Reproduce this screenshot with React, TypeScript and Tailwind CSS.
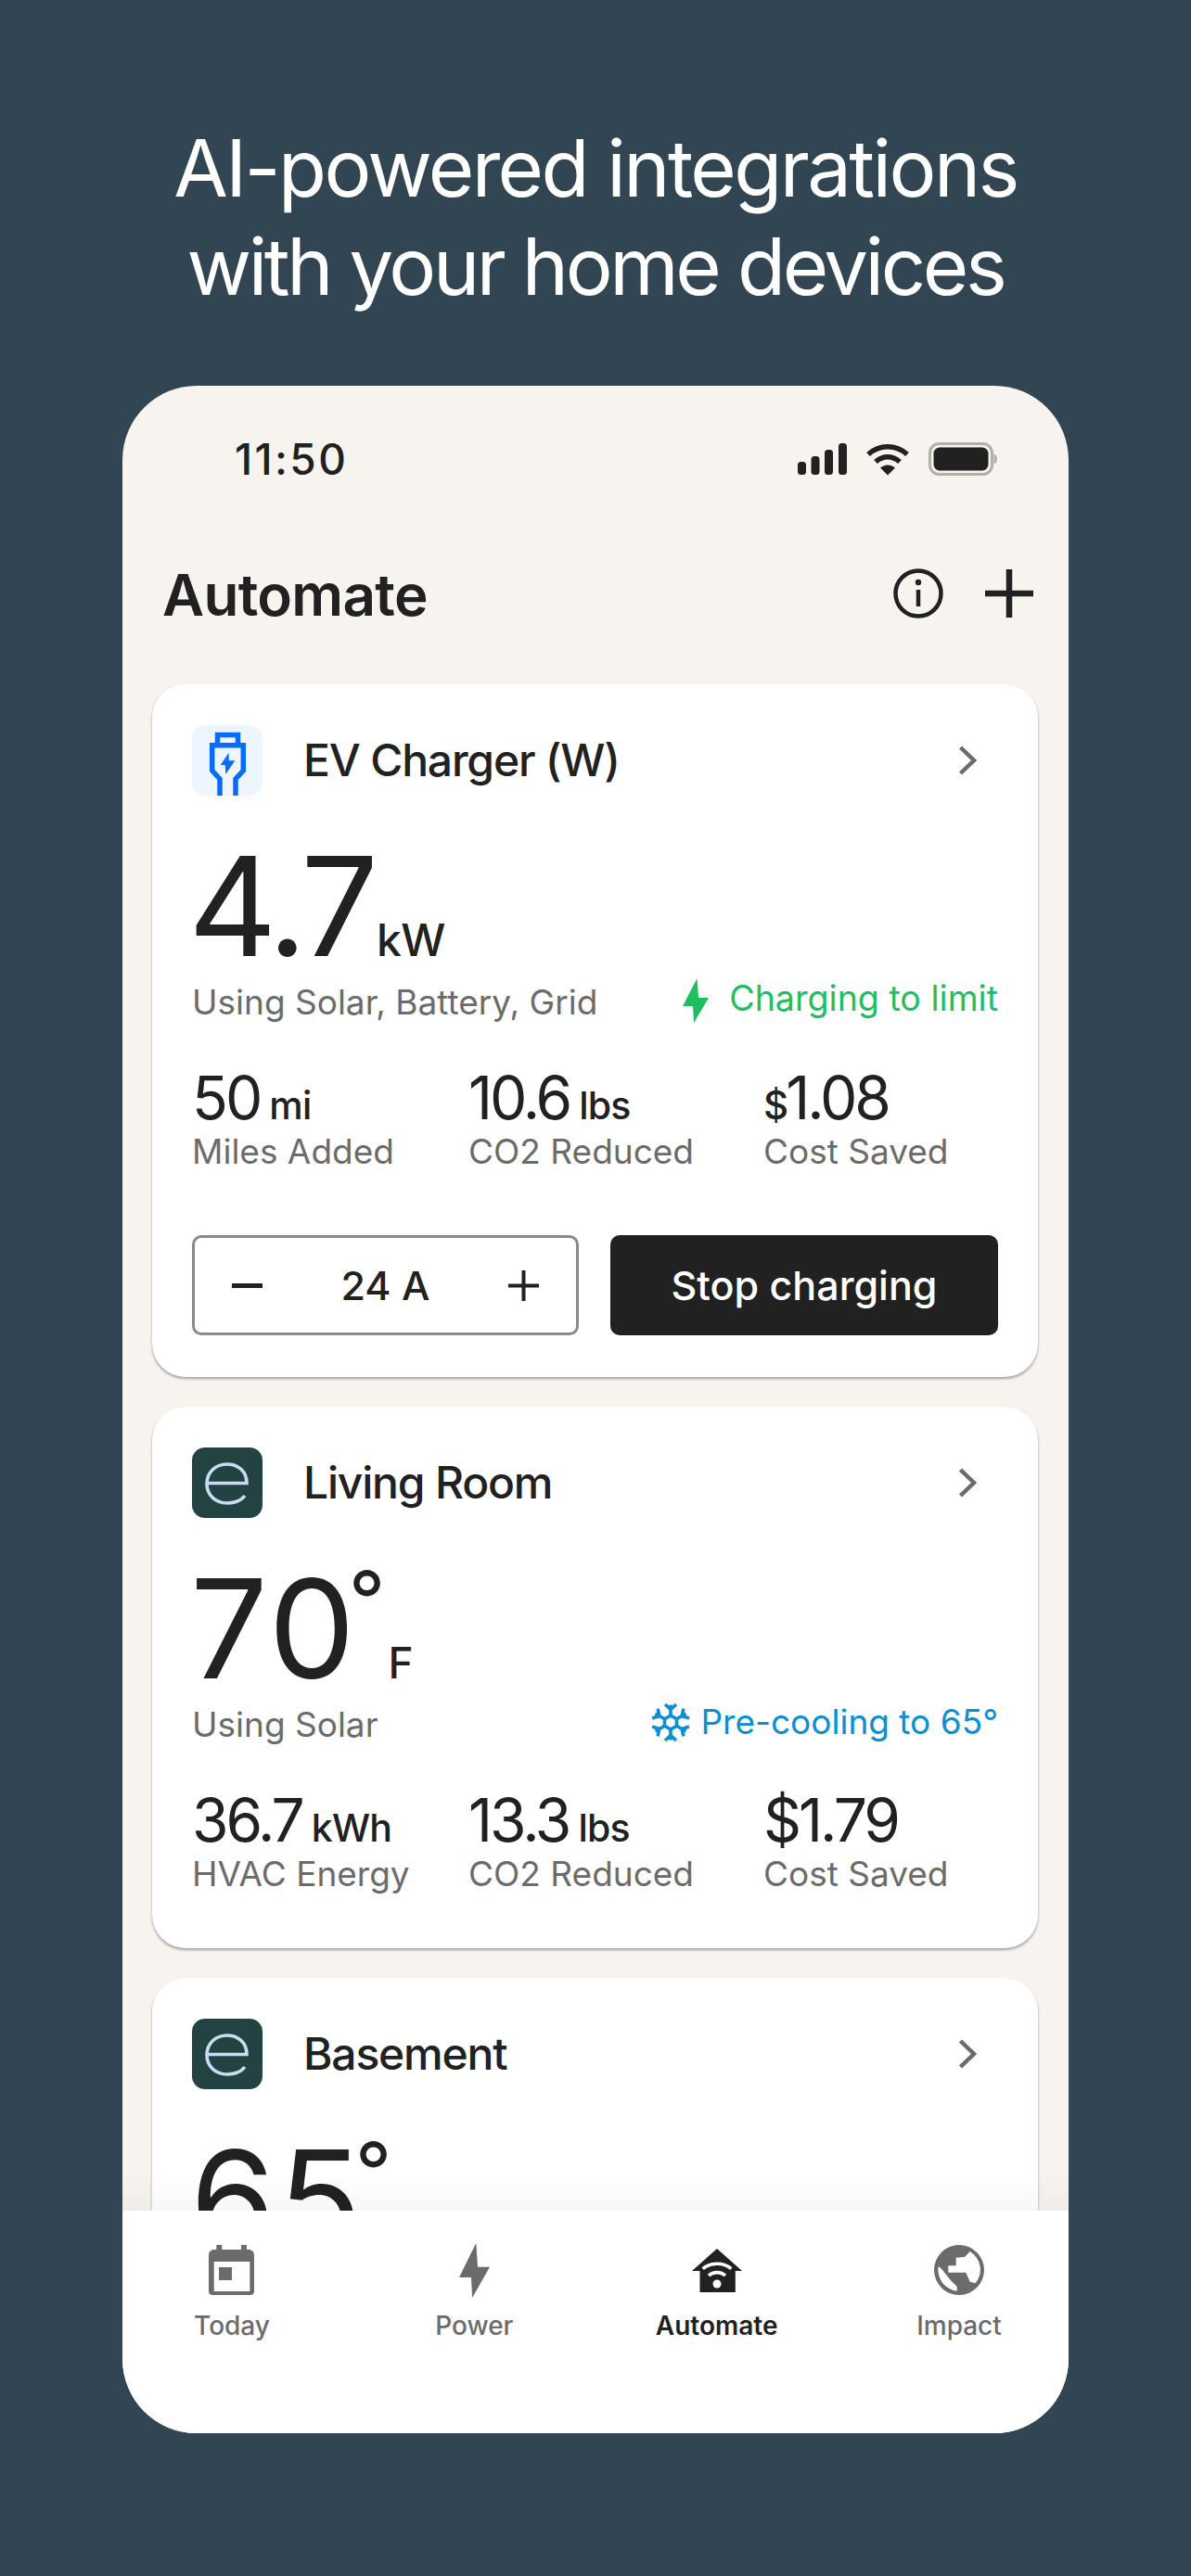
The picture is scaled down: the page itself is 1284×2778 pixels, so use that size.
function Chevron() {
  return (
    <svg width="20" height="32" viewBox="0 0 20 32" fill="none" stroke="#6b6b6b" strokeWidth="4.5" className="mr-[23px]">
      <path d="M2.5 2 L17 16 L2.5 30" />
    </svg>
  );
}

function PlugTile() {
  return (
    <div className="w-[76px] h-[76px] rounded-[14px] bg-[#edf5fe] shrink-0">
      <svg width="76" height="76" viewBox="0 0 76 76" fill="none">
        <path d="M27.5 21V10.5H49.5V21" stroke="#0a6cf5" strokeWidth="5.5" />
        <path d="M30 76V58L21.7 49V21.7H55.3V49L47 58V76" stroke="#0a6cf5" strokeWidth="5.5" />
        <path d="M39.7 29.7L30.7 43H35.7L36.3 53L46.3 38.3H39.7Z" fill="#0a6cf5" />
      </svg>
    </div>
  );
}

function EnphaseTile() {
  return (
    <div className="w-[76px] h-[76px] rounded-[14px] bg-[#234342] shrink-0">
      <svg width="76" height="76" viewBox="0 0 76 76" fill="none">
        <path d="M16 38.5H59C59 26 50 18 38 18C25 18 16 27 16 39C16 51 25 60 38 60C46 60 53 57 57 52" stroke="#cbdcf2" strokeWidth="3.6" />
      </svg>
    </div>
  );
}

function CardHeader({ icon, title }: { icon: React.ReactNode; title: string }) {
  return (
    <div className="flex items-center">
      {icon}
      <span className="ml-[44px] flex-1 text-[48px] leading-[56px] font-medium text-[#212121] tracking-[-1.2px]">{title}</span>
      <Chevron />
    </div>
  );
}

function Stat({ value, unit, label, className }: { value: React.ReactNode; unit?: string; label: string; className: string }) {
  return (
    <div className={className}>
      <div className="flex items-baseline h-[70px]">
        <span className="text-[64px] leading-[70px] text-[#212121] tracking-[-3px]">{value}</span>
        {unit && <span className="ml-[10px] text-[41px] leading-[70px] font-medium text-[#212121] tracking-[-0.8px]">{unit}</span>}
      </div>
      <div className="text-[37px] leading-[46px] text-[#6b6b6b]">{label}</div>
    </div>
  );
}

function Snowflake() {
  const arm = "M21 14.5V2.5M15 2L21 7.5L27 2";
  return (
    <svg width="42" height="44" viewBox="0 0 42 44" fill="none" stroke="#0a8fd4" strokeWidth="3.6" className="mr-[11px]">
      <g transform="translate(0 1)">
        <path d="M21 14L27.5 17.75V25.25L21 29L14.5 25.25V17.75Z" />
        {[0, 60, 120, 180, 240, 300].map((a) => (
          <path key={a} d={arm} transform={`rotate(${a} 21 21.5)`} />
        ))}
      </g>
    </svg>
  );
}

function Temp({ value }: { value: string }) {
  return (
    <span className="-ml-[2px] text-[148px] leading-[148px] font-[420] text-[#212121] tracking-[3px]">
      {value}
      <span className="-ml-[10px] text-[87px] leading-[0] align-[53px] tracking-normal">°</span>
    </span>
  );
}

export default function App() {
  return (
    <div className="h-[2778px] overflow-hidden bg-[#324552] pt-[129px] font-['Inter',sans-serif]">
      <h1 className="text-center text-[85px] leading-[106px] font-normal text-white tracking-[-2.6px]">
        AI-powered integrations
        <br />
        <span className="tracking-[-3.4px]">with your home devices</span>
      </h1>

      <div className="mt-[75px] mx-[132px] h-[2208px] rounded-[80px] overflow-hidden bg-[#f7f4ef] flex flex-col">
        {/* status bar */}
        <div className="flex items-center justify-between pt-[52px] pl-[121px] pr-[77px]">
          <span className="text-[46px] leading-[54px] font-medium text-[#212121] tracking-[2.4px]">11:50</span>
          <div className="flex items-center gap-[20px]">
            <svg width="53" height="34" viewBox="0 0 53 34" fill="#212121">
              <rect x="0" y="20" width="9" height="14" rx="3.5" />
              <rect x="14.5" y="14" width="9" height="20" rx="3.5" />
              <rect x="29" y="7" width="9" height="27" rx="3.5" />
              <rect x="44" y="0" width="9" height="34" rx="3.5" />
            </svg>
            <svg width="48" height="36" viewBox="0 0 48 36" fill="none" stroke="#212121">
              <path d="M3 13C15 2 33 2 45 13" strokeWidth="5.5" />
              <path d="M11 21C19 14 29 14 37 21" strokeWidth="5.5" />
              <path d="M16 27.5C21 23.5 27 23.5 32 27.5L24 35.5Z" fill="#212121" stroke="none" />
            </svg>
            <svg width="74" height="36" viewBox="0 0 74 36" fill="none">
              <rect x="1.5" y="1.5" width="67" height="33" rx="10" stroke="#b3b0ab" strokeWidth="3" />
              <rect x="5.5" y="5.5" width="59" height="25" rx="6.5" fill="#212121" />
              <path d="M70.5 12.5C73 13.5 74 15.5 74 18C74 20.5 73 22.5 70.5 23.5Z" fill="#b3b0ab" />
            </svg>
          </div>
        </div>

        {/* title row */}
        <div className="mt-[85px] mb-[61px] flex items-center pl-[43px] pr-[38px]">
          <span className="flex-1 text-[62px] leading-[70px] font-semibold text-[#212121] tracking-[-0.7px]">Automate</span>
          <svg width="54" height="54" viewBox="0 0 54 54" fill="none" stroke="#212121" className="-mt-[5px]">
            <circle cx="27" cy="27" r="24.5" strokeWidth="4.5" />
            <path d="M27 23V41" strokeWidth="4.5" />
            <circle cx="27" cy="15" r="3.2" fill="#212121" stroke="none" />
          </svg>
          <svg width="52" height="52" viewBox="0 0 52 52" fill="none" stroke="#212121" strokeWidth="6.5" className="ml-[45px] -mt-[5px]">
            <path d="M26 0V52M0 26H52" />
          </svg>
        </div>

        {/* cards */}
        <div className="relative flex-1 overflow-hidden pl-[32px] pr-[33px]">
          <div className="flex flex-col gap-[32px]">
            <div className="bg-white rounded-[36px] pt-[44px] pb-[45px] px-[43px] shadow-[0_2px_3px_rgba(0,0,0,0.35)]">
              <CardHeader icon={<PlugTile />} title="EV Charger (W)" />
              <div className="mt-[46px] flex items-baseline h-[148px]">
                <span className="-ml-[4px] text-[148px] leading-[148px] font-[420] text-[#212121] tracking-[-5px]">4.7</span>
                <span className="ml-[3px] text-[48px] font-medium text-[#212121] tracking-[-0.5px]">kW</span>
              </div>
              <div className="mt-[6px] flex justify-between">
                <span className="text-[37px] leading-[46px] text-[#6b6b6b]">Using Solar, Battery, Grid</span>
                <div className="-mt-[4px] flex items-center h-[46px]">
                  <svg width="28" height="48" viewBox="0 0 28 48" fill="#1fbf5f" className="mr-[22px] mt-[4px]">
                    <path d="M15.5 0L0 30H11L12 48L28 21H17Z" />
                  </svg>
                  <span className="text-[37.6px] leading-[46px] text-[#1fbf5f]">Charging to limit</span>
                </div>
              </div>
              <div className="mt-[45px] flex">
                <Stat className="w-[298px]" value="50" unit="mi" label="Miles Added" />
                <Stat className="w-[318px]" value="10.6" unit="lbs" label="CO2 Reduced" />
                <Stat className="flex-1" value={<><span className="text-[42px] font-medium">$</span>1.08</>} label="Cost Saved" />
              </div>
              <div className="mt-[67px] flex gap-[34px]">
                <div className="w-[417px] h-[108px] rounded-[10px] border-[3px] border-[#8a8a8a] flex items-center justify-between pl-[40px] pr-[40px]">
                  <svg width="33" height="5" viewBox="0 0 33 5" fill="#212121"><rect width="33" height="5" /></svg>
                  <span className="text-[43px] font-medium text-[#212121]">24 A</span>
                  <svg width="33" height="33" viewBox="0 0 33 33" fill="#212121"><path d="M14.5 0H18.5V14.5H33V18.5H18.5V33H14.5V18.5H0V14.5H14.5Z" /></svg>
                </div>
                <div className="flex-1 h-[108px] rounded-[10px] bg-[#212121] flex items-center justify-center text-[43px] font-medium text-white">
                  Stop charging
                </div>
              </div>
            </div>

            <div className="bg-white rounded-[36px] pt-[44px] pb-[57px] px-[43px] shadow-[0_2px_3px_rgba(0,0,0,0.35)]">
              <CardHeader icon={<EnphaseTile />} title="Living Room" />
              <div className="mt-[46px] flex items-baseline h-[148px]">
                <Temp value="70" />
                <span className="ml-[3px] text-[46px] font-medium text-[#212121]">F</span>
              </div>
              <div className="mt-[6px] flex justify-between">
                <span className="text-[37px] leading-[46px] text-[#6b6b6b]">Using Solar</span>
                <div className="-mt-[3px] flex items-center h-[46px]">
                  <Snowflake />
                  <span className="text-[37px] leading-[46px] text-[#0a8fd4]">Pre-cooling to 65°</span>
                </div>
              </div>
              <div className="mt-[45px] flex">
                <Stat className="w-[298px]" value="36.7" unit="kWh" label="HVAC Energy" />
                <Stat className="w-[318px]" value="13.3" unit="lbs" label="CO2 Reduced" />
                <Stat className="flex-1" value="$1.79" label="Cost Saved" />
              </div>
            </div>

            <div className="bg-white rounded-[36px] pt-[44px] pb-[44px] px-[43px] shadow-[0_2px_3px_rgba(0,0,0,0.35)]">
              <CardHeader icon={<EnphaseTile />} title="Basement" />
              <div className="mt-[46px] flex items-baseline h-[148px]">
                <Temp value="65" />
              </div>
            </div>
          </div>
          <div className="absolute left-0 right-0 bottom-0 h-[40px] bg-gradient-to-b from-transparent to-black/[0.03]" />
        </div>

        {/* tab bar */}
        <div className="h-[240px] bg-white pt-[32px] px-[18px] flex justify-between shrink-0">
          <div className="w-[200px] flex flex-col items-center">
            <div className="h-[64px] flex items-center">
              <svg width="50" height="54" viewBox="0 0 50 54" fill="#6b6b6b">
                <path d="M8.3 0H14.3V5H35V0H41V5H43C46.5 5 49 7.5 49 11V50C49 52.5 47 54 45 54H4C2 54 0 52.5 0 50V11C0 7.5 2.5 5 6 5H8.3Z" />
                <rect x="5.7" y="18" width="38.6" height="32" fill="#fff" />
                <rect x="11" y="24" width="14" height="14" />
              </svg>
            </div>
            <span className="mt-[11px] text-[28px] leading-[34px] font-medium text-[#6b6b6b]">Today</span>
          </div>
          <div className="w-[200px] flex flex-col items-center">
            <div className="h-[64px] flex items-center">
              <svg width="33" height="59" viewBox="0 0 28 48" preserveAspectRatio="none" fill="#6b6b6b">
                <path d="M15.5 0L0 30H11L12 48L28 21H17Z" />
              </svg>
            </div>
            <span className="mt-[11px] text-[28px] leading-[34px] font-medium text-[#6b6b6b]">Power</span>
          </div>
          <div className="w-[200px] flex flex-col items-center">
            <div className="h-[64px] flex items-center">
              <svg width="54" height="47" viewBox="0 0 54 47">
                <path d="M27 0L54 24H46.8V47H8.5V24H0Z" fill="#212121" />
                <path d="M11.7 21.7C20 14.5 34 14.5 42.3 21.7" fill="none" stroke="#fff" strokeWidth="3.6" />
                <path d="M18 29C23 24.5 31 24.5 36 29" fill="none" stroke="#fff" strokeWidth="3.6" />
                <circle cx="27" cy="38" r="4.5" fill="#fff" />
              </svg>
            </div>
            <span className="mt-[11px] text-[28px] leading-[34px] font-semibold text-[#212121]">Automate</span>
          </div>
          <div className="w-[200px] flex flex-col items-center">
            <div className="h-[64px] flex items-center">
              <svg width="54" height="54" viewBox="0 0 54 54">
                <circle cx="27" cy="27" r="27" fill="#6b6b6b" />
                <path d="M15.3 22.3V29.7H34.3L38.7 39.7L44.7 41.3A23 23 0 0 0 38.7 7L33 13L23.7 13.7V22.3Z" fill="#fff" />
                <path d="M4.7 23L8 25.7L18.7 39L24.7 44.7V49.7A23 23 0 0 1 4.7 23Z" fill="#fff" />
              </svg>
            </div>
            <span className="mt-[11px] text-[28px] leading-[34px] font-medium text-[#6b6b6b]">Impact</span>
          </div>
        </div>
      </div>
    </div>
  );
}
